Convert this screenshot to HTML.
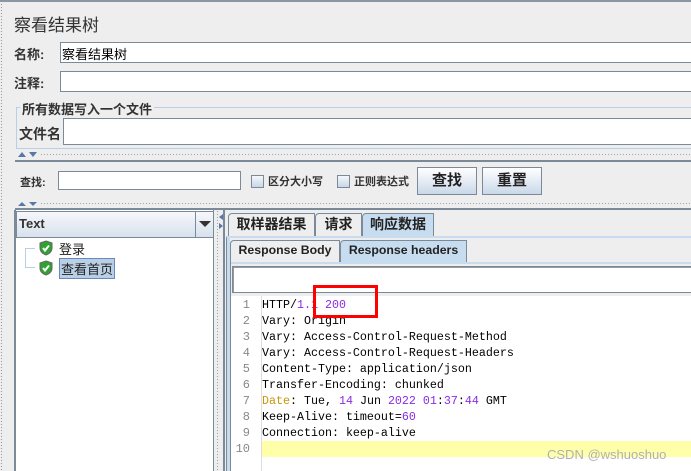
<!DOCTYPE html>
<html><head><meta charset="utf-8"><style>
*{margin:0;padding:0;box-sizing:border-box}
body{width:691px;height:471px;overflow:hidden;background:#eeeeee;position:relative;font-family:"Liberation Sans","Noto Sans CJK SC",sans-serif;color:#333}
.a{position:absolute}
.inp{position:absolute;background:#fff;border:1px solid #7a8a99;border-right:none}
.lbl{position:absolute;font-size:13px;font-weight:bold;color:#333}
.dots{position:absolute;height:4px;background-image:radial-gradient(#9aa 0.6px,transparent 0.8px);background-size:3px 3px}
.cb{position:absolute;width:13px;height:13px;border:1px solid #7a8a99;background:linear-gradient(#f4f7fb,#c8d6e6)}
.btn{position:absolute;border:1px solid #7a8a99;background:linear-gradient(#ffffff,#dfe8f2 60%,#c9d8e8);font-size:15px;font-weight:bold;text-align:center;color:#222}
.tab{position:absolute;border:1px solid #7a8a99;border-bottom:none;border-radius:4px 0 0 0;background:#eeeeee;font-size:14px;font-weight:bold;color:#222;text-align:center}
.code{position:absolute;font-family:"Liberation Mono","DejaVu Sans Mono",monospace;font-size:11.67px;line-height:16px;white-space:pre;color:#000}
.ln{position:absolute;font-family:"Liberation Mono",monospace;font-size:12px;line-height:16px;color:#888;text-align:right;width:22px}
.p{color:#8a2be2}
</style></head><body>
<div class="a" style="left:0;top:0;width:2px;height:471px;background-image:radial-gradient(#999 0.6px,transparent 0.8px);background-size:3px 3px"></div>
<div class="a" style="left:0;top:0;width:691px;height:2px;background:#8a96a3"></div>
<div class="a" style="left:14px;top:11px;font-size:17px;color:#333">察看结果树</div>
<div class="lbl" style="left:14px;top:44px">名称:</div>
<div class="inp" style="left:60px;top:42px;width:631px;height:21px;font-size:13px;padding:1px 0 0 1px;color:#000">察看结果树</div>
<div class="lbl" style="left:14px;top:73px">注释:</div>
<div class="inp" style="left:60px;top:71px;width:631px;height:21px"></div>
<div class="a" style="left:16px;top:107px;width:680px;height:42px;border:1px solid #b8cfe5;border-right:none"></div>
<div class="lbl" style="left:20px;top:99px;background:#eeeeee;padding:0 2px">所有数据写入一个文件</div>
<div class="lbl" style="left:19px;top:124px;font-size:14px">文件名</div>
<div class="inp" style="left:63px;top:118px;width:628px;height:27px"></div>
<svg class="a" style="left:17px;top:151px" width="22" height="7"><path d="M1 6 L5 1 L9 6Z" fill="#5577aa"/><path d="M12 1 L20 1 L16 6Z" fill="#5577aa"/></svg>
<div class="dots" style="left:40px;top:153px;width:651px"></div>
<div class="a" style="left:15px;top:160px;width:676px;height:2px;background:#7a8a99"></div>
<div class="lbl" style="left:20px;top:174px;font-size:11px">查找:</div>
<div class="inp" style="left:58px;top:171px;width:183px;height:19px;border-right:1px solid #7a8a99"></div>
<div class="cb" style="left:251px;top:175px"></div>
<div class="lbl" style="left:268px;top:173px;font-size:11px">区分大小写</div>
<div class="cb" style="left:337px;top:175px"></div>
<div class="lbl" style="left:354px;top:173px;font-size:11px">正则表达式</div>
<div class="btn" style="left:417px;top:167px;width:60px;height:28px;line-height:26px">查找</div>
<div class="btn" style="left:482px;top:167px;width:60px;height:28px;line-height:26px">重置</div>
<svg class="a" style="left:17px;top:201px" width="22" height="6"><path d="M1 5 L5 1 L9 5Z" fill="#5577aa"/><path d="M12 1 L20 1 L16 5Z" fill="#5577aa"/></svg>
<div class="dots" style="left:40px;top:202px;width:651px"></div>
<div class="a" style="left:15px;top:208px;width:676px;height:2px;background:#7a8a99"></div>
<div class="a" style="left:14px;top:210px;width:2px;height:261px;background:#7a8a99"></div>
<div class="a" style="left:16px;top:210px;width:198px;height:261px;background:#fff;border-right:1px solid #7a8a99"></div>
<div class="a" style="left:16px;top:211px;width:198px;height:27px;background:linear-gradient(#f6f8fb,#d7e1ec);border:1px solid #7a8a99"></div>
<div class="a" style="left:19px;top:216px;font-size:13px;font-weight:bold;color:#333">Text</div>
<div class="a" style="left:195px;top:211px;width:19px;height:27px;border-left:1px solid #7a8a99"></div>
<svg class="a" style="left:199px;top:221px" width="12" height="7"><path d="M0 0 L12 0 L6 6Z" fill="#333"/></svg>
<div class="a" style="left:25px;top:248px;width:1px;height:20px;background:#b8cfe5"></div>
<div class="a" style="left:25px;top:248px;width:10px;height:1px;background:#b8cfe5"></div>
<div class="a" style="left:25px;top:267px;width:10px;height:1px;background:#b8cfe5"></div>
<svg class="a" style="left:38px;top:240px" width="16" height="16"><path d="M8 1 L14 3 L14 8 Q14 13 8 15 Q2 13 2 8 L2 3Z" fill="#2fa32f" stroke="#666"/><path d="M5 8 L7 10.5 L11 5.5" stroke="#fff" stroke-width="2" fill="none"/></svg>
<div class="a" style="left:59px;top:239px;font-size:13px;color:#222">登录</div>
<svg class="a" style="left:38px;top:260px" width="16" height="16"><path d="M8 1 L14 3 L14 8 Q14 13 8 15 Q2 13 2 8 L2 3Z" fill="#2fa32f" stroke="#666"/><path d="M5 8 L7 10.5 L11 5.5" stroke="#fff" stroke-width="2" fill="none"/></svg>
<div class="a" style="left:59px;top:258px;font-size:13px;color:#222;background:#b8cfe5;border:1px solid #6688bb;padding:0 1px">查看首页</div>
<div class="dots" style="left:216px;top:210px;width:4px;height:261px;background-size:3px 3px"></div>
<svg class="a" style="left:218px;top:214px" width="6" height="16"><path d="M5 0 L5 6 L1 3Z" fill="#5577aa"/><path d="M1 9 L1 15 L5 12Z" fill="#5577aa"/></svg>
<div class="a" style="left:223px;top:210px;width:2px;height:261px;background:#7a8a99"></div>
<div class="tab" style="left:228px;top:213px;width:87px;height:23px;line-height:21px">取样器结果</div>
<div class="tab" style="left:315px;top:213px;width:47px;height:23px;line-height:21px">请求</div>
<div class="tab" style="left:362px;top:213px;width:72px;height:24px;line-height:21px;background:#c8dcf0">响应数据</div>
<div class="a" style="left:226px;top:236px;width:465px;height:235px;border:1px solid #7a8a99;border-right:none;border-top:2px solid #c8dcf0;background:#eee"></div>
<div class="a" style="left:227px;top:238px;width:3px;height:233px;background:#c8dcf0"></div>
<div class="tab" style="left:230px;top:240px;width:110px;height:22px;line-height:19px;font-size:12.3px">Response Body</div>
<div class="tab" style="left:340px;top:240px;width:127px;height:23px;line-height:19px;font-size:12.3px;background:#c8dcf0">Response headers</div>
<div class="a" style="left:230px;top:262px;width:461px;height:2px;background:#c8dcf0"></div>
<div class="a" style="left:230px;top:262px;width:1px;height:209px;background:#7a8a99"></div>
<div class="inp" style="left:232px;top:266px;width:459px;height:27px;border:1px solid #7a8a99;border-right:none;box-shadow:inset 1px 1px 0 #999"></div>
<div class="a" style="left:231px;top:296px;width:460px;height:175px;background:#fff"></div>
<div class="a" style="left:261px;top:296px;width:1px;height:175px;background:#ddd"></div>
<div class="a" style="left:262px;top:441px;width:429px;height:16px;background:#ffffaa"></div>
<div class="ln" style="left:228px;top:297px">1<br>2<br>3<br>4<br>5<br>6<br>7<br>8<br>9<br>10</div>
<div class="code" style="left:262px;top:297px">HTTP/<span class="p">1.1 200</span>
Vary: Origin
Vary: Access-Control-Request-Method
Vary: Access-Control-Request-Headers
Content-Type: application/json
Transfer-Encoding: chunked
<span style="color:#c8960a">Date</span>: Tue, <span class="p">14</span> Jun <span class="p">2022 01</span>:<span class="p">37</span>:<span class="p">44</span> GMT
Keep-Alive: timeout=<span class="p">60</span>
Connection: keep-alive</div>
<div class="a" style="left:313px;top:285px;width:65px;height:33px;border:3px solid #f00"></div>
<div class="a" style="left:547px;top:447px;font-size:13px;color:#b0b0b0">CSDN @wshuoshuo</div>
</body></html>
